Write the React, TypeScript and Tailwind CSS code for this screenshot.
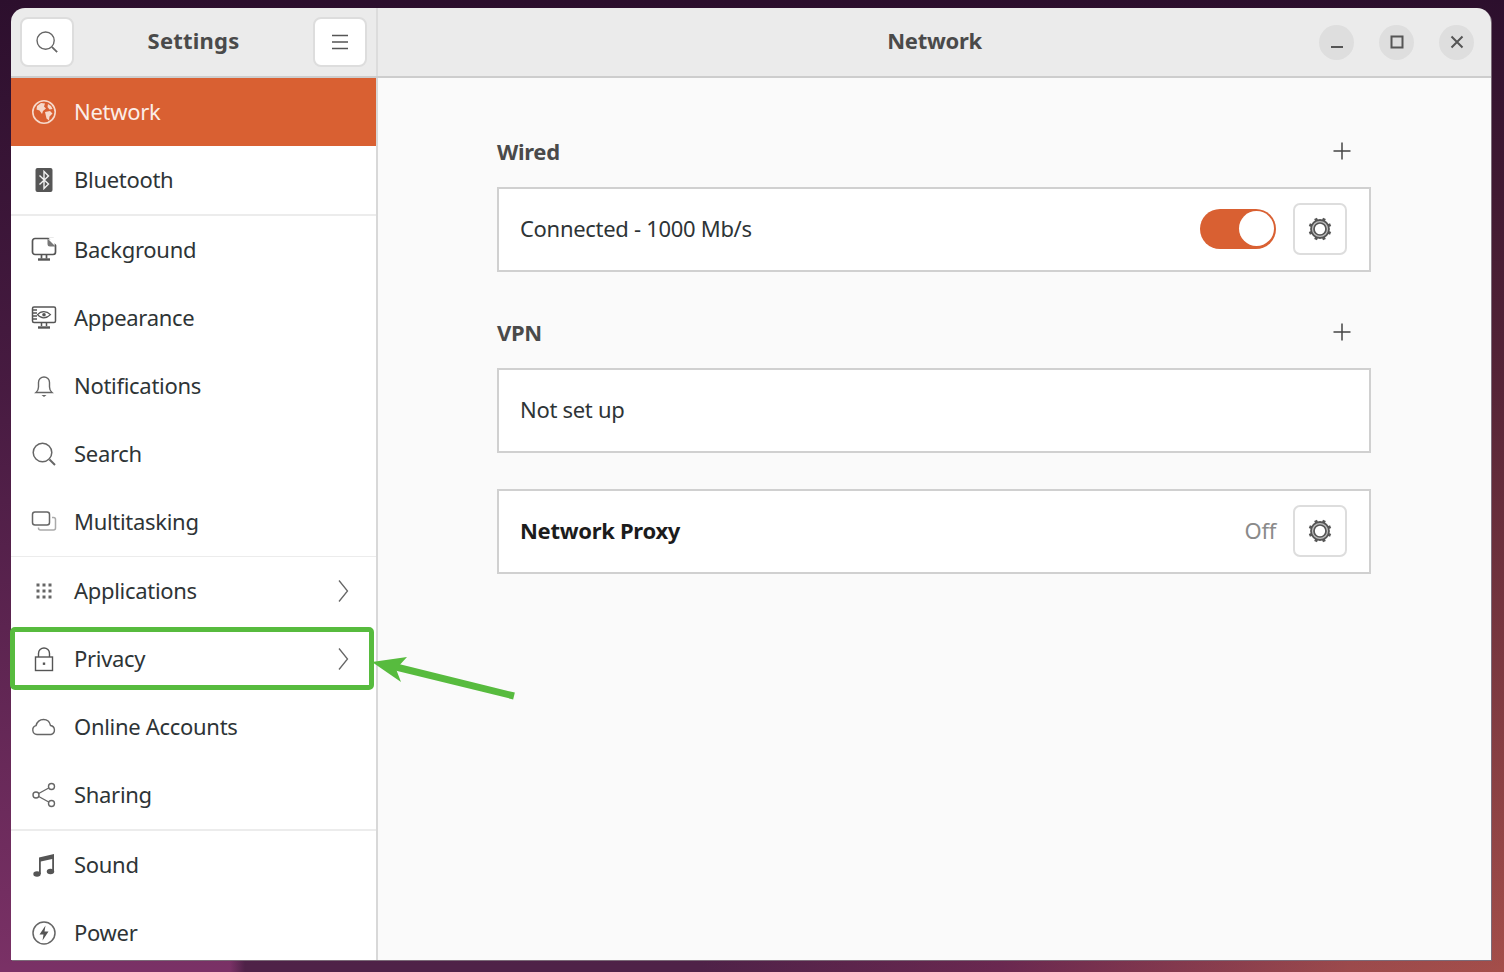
import React from 'react';

const font = "font-['Noto_Sans',sans-serif]";

type IconProps = { className?: string };

const Globe = () => (
  <svg viewBox="0 0 26 26" className="w-[26px] h-[26px]">
    <circle cx="13" cy="13" r="11.2" fill="none" stroke="#f6d9cb" strokeWidth="1.6" />
    <path d="M6 7l4-3 4 .5-1 3 2 2-3 2.5-1 3-2.5-3.5L5.5 10.5z" fill="#f6d9cb" />
    <path d="M14 13l5-1 2.5 2.5-3 3-.5 4-2.500-2z" fill="#f6d9cb" />
    <path d="M17 5l3 2 1.500 3-3 .5-2-2.500z" fill="#f6d9cb" />
  </svg>
);

const Bluetooth = () => (
  <svg viewBox="0 0 26 26" className="w-[26px] h-[26px]">
    <rect x="4.500" y="1" width="17" height="24" rx="2" fill="#565656" />
    <path d="M8.500 8.500l9 8.500-4.500 4.500v-17L17.500 9l-9 8.500" fill="none" stroke="#f2f2f2" strokeWidth="1.400" />
  </svg>
);

const Background = () => (
  <svg viewBox="0 0 26 26" className="w-[26px] h-[26px]" fill="none" stroke="#555" strokeWidth="1.700">
    <rect x="1.500" y="1.500" width="23" height="16" rx="2.500" />
    <path d="M17 .5h9v8z" fill="#ffffff" stroke="none" />
    <path d="M16.500 1.500L24.500 9.500H19a2.500 2.500 0 0 1-2.500-2.500z" fill="#777" stroke="none" />
    <path d="M10.500 18v3.500M15.500 18v3.500" />
    <path d="M7 22.500h12" strokeWidth="2.400" />
  </svg>
);

const Appearance = () => (
  <svg viewBox="0 0 26 26" className="w-[26px] h-[26px]" fill="none" stroke="#555" strokeWidth="1.500">
    <rect x="1.500" y="2" width="23" height="15.500" rx="1.500" />
    <path d="M2 5h4M2 8h4M2 11h4M2 14h4" strokeWidth="1.300" />
    <path d="M6.500 9.700c3.500-4.200 9-4.200 13 0-4 4.200-9.500 4.200-13 0z" strokeWidth="1.200" />
    <circle cx="13" cy="9.700" r="1.800" fill="#555" stroke="none" />
    <path d="M10.500 18v3M15.500 18v3" />
    <path d="M7 22.500h12" strokeWidth="2.400" />
  </svg>
);

const Bell = () => (
  <svg viewBox="0 0 26 26" className="w-[26px] h-[26px]" fill="none" stroke="#666" strokeWidth="1.400">
    <path d="M5 19.500h16c-1.800-1.500-2.500-3-2.500-5.500V9.500a5.500 5.500 0 0 0-11 0V14c0 2.500-.7 4-2.500 5.500z" />
    <path d="M10.500 22h5l-2.500 2z" fill="#666" stroke="none" />
  </svg>
);

const SearchGlass = ({ className = 'w-[26px] h-[26px]' }: IconProps) => (
  <svg viewBox="0 0 26 26" className={className} fill="none" stroke="#666" strokeWidth="1.500">
    <circle cx="11.500" cy="11.500" r="9.300" />
    <path d="M18.500 18.500l5.500 5.500" strokeWidth="2" />
  </svg>
);

const Multitasking = () => (
  <svg viewBox="0 0 26 26" className="w-[26px] h-[26px]" fill="none" stroke="#666" strokeWidth="1.500">
    <rect x="1.500" y="3" width="17" height="13" rx="2.500" />
    <path d="M21 8.500h1.500a2 2 0 0 1 2 2V19a2 2 0 0 1-2 2H9.500a2 2 0 0 1-2-2v-.5" stroke="#aaa" />
  </svg>
);

const Grid = () => (
  <svg viewBox="0 0 26 26" className="w-[26px] h-[26px]" fill="#666">
    {[7, 13, 19].flatMap((x) =>
      [7, 13, 19].map((y) => <rect key={`${x}-${y}`} x={x - 1.5} y={y - 1.5} width="3" height="3" />),
    )}
  </svg>
);

const Lock = () => (
  <svg viewBox="0 0 26 26" className="w-[26px] h-[26px]" fill="none" stroke="#555" strokeWidth="1.400">
    <rect x="4.500" y="11" width="17" height="13.500" />
    <path d="M7.500 11V7.500a5.500 5.500 0 0 1 11 0V11" />
    <rect x="11.800" y="16.500" width="2.400" height="2.400" fill="#555" stroke="none" />
  </svg>
);

const Cloud = () => (
  <svg viewBox="0 0 26 26" className="w-[26px] h-[26px]" fill="none" stroke="#666" strokeWidth="1.400">
    <path d="M6 20.500a4.500 4.500 0 0 1-1-8.800C6 8 9 5.500 12.500 5.500c3.700 0 6.300 2.500 7 6a4.600 4.600 0 0 1 .5 9z" />
  </svg>
);

const Share = () => (
  <svg viewBox="0 0 26 26" className="w-[26px] h-[26px]" fill="none" stroke="#666" strokeWidth="1.400">
    <circle cx="20.500" cy="4.500" r="3" />
    <circle cx="5" cy="13" r="3" />
    <circle cx="20.500" cy="21.500" r="3" />
    <path d="M7.700 11.500l10-5.500M7.700 14.500l10 5.500" />
  </svg>
);

const Note = () => (
  <svg viewBox="0 0 26 26" className="w-[26px] h-[26px]" fill="#555">
    <path d="M8 5.500L23 2v17h-1.800V7L9.800 9.500V22H8z" />
    <ellipse cx="6" cy="22" rx="3.700" ry="2.800" />
    <ellipse cx="19.500" cy="19.500" rx="3.700" ry="2.800" />
  </svg>
);

const Power = () => (
  <svg viewBox="0 0 26 26" className="w-[26px] h-[26px]">
    <circle cx="13" cy="13" r="11" fill="none" stroke="#666" strokeWidth="1.500" />
    <path d="M14.500 5.500L8.500 14.500h4l-1 6 6-9h-4z" fill="#555" />
  </svg>
);

const Chevron = () => (
  <svg viewBox="0 0 12 24" className="w-[12px] h-[24px]" fill="none" stroke="#666" strokeWidth="1.300">
    <path d="M2 1.500L10.500 12 2 22.500" />
  </svg>
);

const Gear = () => (
  <svg viewBox="0 0 26 26" className="w-[26px] h-[26px]">
    <circle cx="13" cy="13" r="9" fill="#bdbdbd" stroke="#555" strokeWidth="1.800" />
    <circle cx="13" cy="13" r="6" fill="#ffffff" stroke="#555" strokeWidth="1.700" />
    {[22.5, 67.5, 112.5, 157.5, 202.5, 247.5, 292.5, 337.5].map((a) => (
      <rect key={a} x="11.500" y="1.500" width="3" height="2.500" fill="#555" transform={`rotate(${a} 13 13)`} />
    ))}
  </svg>
);

const Plus = () => (
  <svg viewBox="0 0 18 18" className="w-[18px] h-[18px]" stroke="#444" strokeWidth="1.500">
    <path d="M9 .5v17M.5 9h17" />
  </svg>
);

const SettingsButton = () => (
  <button className="w-[54px] h-[52px] flex items-center justify-center bg-white border-2 border-[#dddddd] rounded-[7px]">
    <Gear />
  </button>
);

const WinButton = ({ children }: { children: React.ReactNode }) => (
  <div className="w-[35px] h-[35px] rounded-full bg-[#dedede] flex items-center justify-center">{children}</div>
);

const groups: { label: string; icon: React.ReactNode; chevron?: boolean; active?: boolean }[][] = [
  [
    { label: 'Network', icon: <Globe />, active: true },
    { label: 'Bluetooth', icon: <Bluetooth /> },
  ],
  [
    { label: 'Background', icon: <Background /> },
    { label: 'Appearance', icon: <Appearance /> },
    { label: 'Notifications', icon: <Bell /> },
    { label: 'Search', icon: <SearchGlass /> },
    { label: 'Multitasking', icon: <Multitasking /> },
  ],
  [
    { label: 'Applications', icon: <Grid />, chevron: true },
    { label: 'Privacy', icon: <Lock />, chevron: true },
    { label: 'Online Accounts', icon: <Cloud /> },
    { label: 'Sharing', icon: <Share /> },
  ],
  [
    { label: 'Sound', icon: <Note /> },
    { label: 'Power', icon: <Power /> },
  ],
];

export default function App() {
  return (
    <div
      className={`relative w-[1504px] h-[972px] overflow-hidden pt-[8px] pl-[11px] bg-[linear-gradient(to_bottom,rgba(44,15,45,1)_0%,rgba(44,15,45,0.65)_40%,rgba(44,15,45,0)_100%),linear-gradient(90deg,#7a3166_0,#7a3166_230px,#4f2248_245px,#4f2248_700px,#6a2850_1000px,#9c4a4c_1350px,#a44e4a_100%)] ${font}`}
    >
      <div className="w-[1480px] h-[952px] rounded-t-[14px] overflow-hidden flex flex-col shadow-[1px_1px_0_#7b6b78]">
        <header className="h-[70px] shrink-0 flex bg-[#ebebeb] border-b-2 border-[#cdcdcd]">
          <div className="w-[367px] shrink-0 flex items-center justify-between px-[9px] border-r-2 border-[#dcdcdc]">
            <button className="w-[54px] h-[50px] flex items-center justify-center bg-white border-2 border-[#dddddd] rounded-[8px]">
              <SearchGlass className="w-[24px] h-[24px]" />
            </button>
            <span className="pb-[4px] text-[22px] font-bold tracking-[0.2px] text-[#4a4a4a]">Settings</span>
            <button className="w-[54px] h-[50px] flex items-center justify-center bg-white border-2 border-[#dddddd] rounded-[8px]">
              <svg viewBox="0 0 16 16" className="w-[16px] h-[16px]" stroke="#555" strokeWidth="1.500">
                <path d="M0 1.500h16M0 8h16M0 14.500h16" />
              </svg>
            </button>
          </div>
          <div className="flex-1 flex items-center relative pr-[17px] justify-end gap-[25px]">
            <span className="absolute inset-x-0 pb-[4px] text-center text-[22px] font-bold tracking-[-0.3px] text-[#4a4a4a]">
              Network
            </span>
            <WinButton>
              <svg viewBox="0 0 14 14" className="w-[14px] h-[14px] mt-[4px]" stroke="#555" strokeWidth="2">
                <path d="M1 10h12" />
              </svg>
            </WinButton>
            <WinButton>
              <svg viewBox="0 0 14 14" className="w-[14px] h-[14px]" fill="none" stroke="#555" strokeWidth="2">
                <rect x="1.500" y="1.500" width="11" height="11" />
              </svg>
            </WinButton>
            <WinButton>
              <svg viewBox="0 0 14 14" className="w-[14px] h-[14px]" stroke="#555" strokeWidth="2">
                <path d="M1.500 1.500l11 11M12.500 1.500l-11 11" />
              </svg>
            </WinButton>
          </div>
        </header>
        <div className="flex-1 min-h-0 flex">
          <nav className="w-[367px] shrink-0 bg-white border-r-2 border-[#d8d8d8] overflow-hidden">
            {groups.map((group, i) => (
              <div key={i} className={`border-[#ececec] ${i === 1 ? 'border-b' : 'border-b-2'}`}>
                {group.map((item) => (
                  <div
                    key={item.label}
                    className={`h-[68px] flex items-center pl-[20px] pr-[27px] gap-[17px] text-[22px] tracking-[-0.3px] ${
                      item.active ? 'bg-[#d96032] text-[#fbeee8]' : 'text-[#2e3436]'
                    }`}
                  >
                    <span className="w-[26px] h-[26px] shrink-0">{item.icon}</span>
                    <span className="flex-1 pb-[2px]">{item.label}</span>
                    {item.chevron && <Chevron />}
                  </div>
                ))}
              </div>
            ))}
          </nav>
          <main className="flex-1 bg-[#fafafa] pl-[119px] pt-[56px]">
            <div className="w-[874px] flex flex-col tracking-[-0.3px] text-[22px]">
              <div className="h-[36px] pb-[2px] flex items-center justify-between pr-[20px] font-bold text-[#4a4a4a]">
                <span>Wired</span>
                <Plus />
              </div>
              <div className="mt-[17px] h-[85px] pb-[2px] flex items-center bg-white border-2 border-[#d0d0d0] pl-[21px] pr-[22px] text-[#2e3436]">
                <span className="flex-1">Connected - 1000 Mb/s</span>
                <div className="w-[76px] h-[40px] rounded-full bg-[#d96032] flex items-center justify-end pr-[2px] mr-[17px]">
                  <div className="w-[35px] h-[35px] rounded-full bg-white" />
                </div>
                <SettingsButton />
              </div>
              <div className="mt-[43px] h-[36px] pb-[2px] flex items-center justify-between pr-[20px] font-bold text-[#4a4a4a]">
                <span>VPN</span>
                <Plus />
              </div>
              <div className="mt-[17px] h-[85px] pb-[2px] flex items-center bg-white border-2 border-[#d0d0d0] pl-[21px] text-[#2e3436]">
                Not set up
              </div>
              <div className="mt-[36px] h-[85px] pb-[2px] flex items-center bg-white border-2 border-[#d0d0d0] pl-[21px] pr-[22px] text-[#2e3436]">
                <span className="flex-1 font-bold text-[#1c1c1c]">Network Proxy</span>
                <span className="mr-[17px] text-[#8a8a8a]">Off</span>
                <SettingsButton />
              </div>
            </div>
          </main>
        </div>
      </div>

      {/* annotation added over the screenshot */}
      <div className="absolute left-[10px] top-[627px] w-[364px] h-[63px] border-[5px] border-[#57bb3e] rounded-[5px]" />
      <svg className="absolute left-[370px] top-[650px] w-[150px] h-[52px]" viewBox="0 0 150 52">
        <path d="M144 46L26 17" stroke="#57bb3e" strokeWidth="7" />
        <path d="M2 12L37 7 26 19l5 13z" fill="#57bb3e" />
      </svg>
    </div>
  );
}
